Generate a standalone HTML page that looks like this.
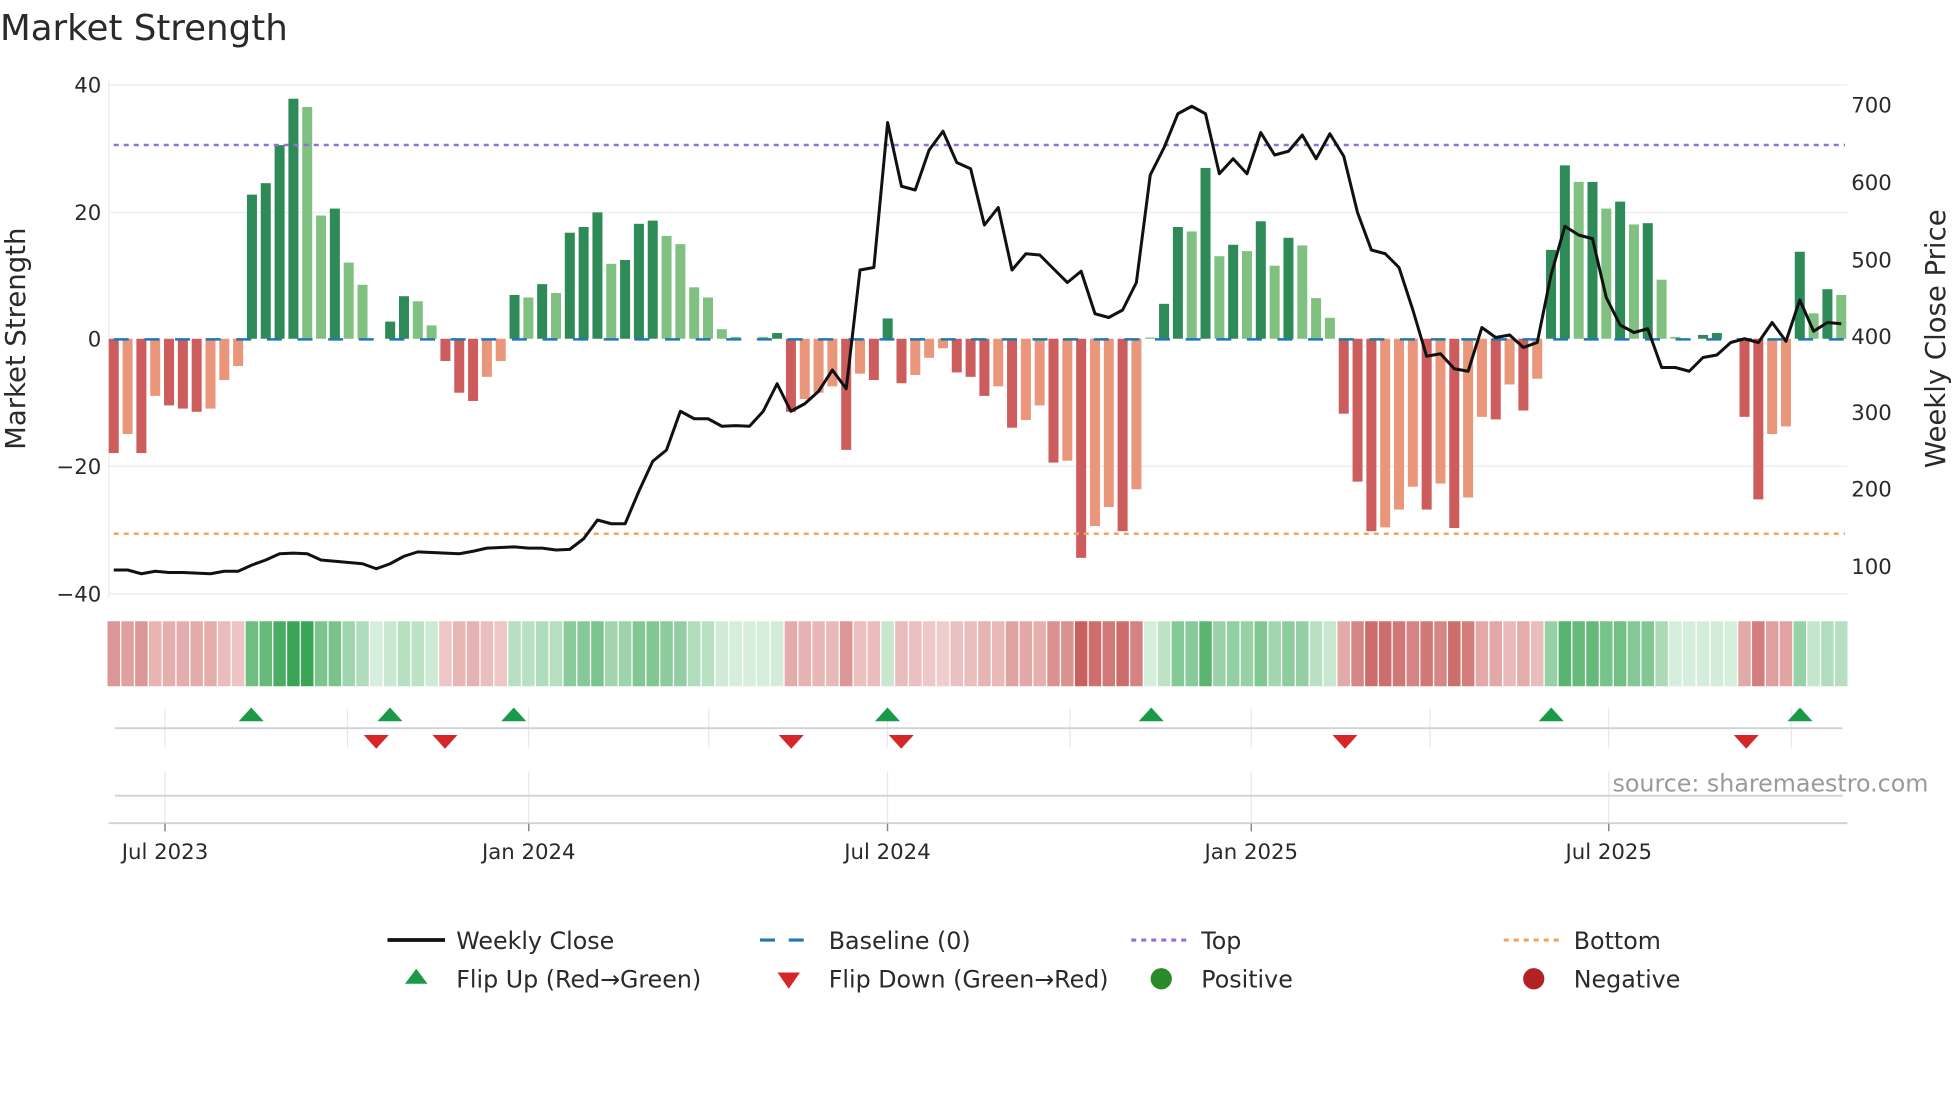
<!DOCTYPE html>
<html><head><meta charset="utf-8"><style>
html,body{margin:0;padding:0;background:#fff;}
svg{display:block;}
text{font-family:"DejaVu Sans","Liberation Sans",sans-serif;fill:#2a2a2a;}
</style></head><body>
<svg id="s" width="1960" height="1102" viewBox="0 0 1568 881.6" xmlns="http://www.w3.org/2000/svg">
<rect width="1568" height="882" fill="#fff"/>
<text x="0" y="32" font-size="28.5">Market Strength</text>
<g id="grid" stroke="#eceef2" stroke-width="1.2">
<line x1="87" y1="68" x2="1478" y2="68"/><line x1="87" y1="170" x2="1478" y2="170"/>
<line x1="87" y1="373" x2="1478" y2="373"/><line x1="87" y1="475" x2="1478" y2="475"/>
<line x1="87" y1="64" x2="87" y2="478"/>
</g>
<g font-size="17" text-anchor="end">
<text x="81" y="74">40</text><text x="81" y="176">20</text><text x="81" y="277">0</text>
<text x="81" y="379">−20</text><text x="81" y="481">−40</text>
</g>
<g font-size="17">
<text x="1481" y="90">700</text><text x="1481" y="152">600</text><text x="1481" y="214">500</text>
<text x="1481" y="275">400</text><text x="1481" y="336">300</text><text x="1481" y="397">200</text><text x="1481" y="459">100</text>
</g>
<text transform="translate(20,271) rotate(-90)" font-size="22" text-anchor="middle">Market Strength</text>
<text transform="translate(1556,271) rotate(-90)" font-size="22" text-anchor="middle">Weekly Close Price</text>
<g id="bars"></g>
<line x1="91" y1="271.5" x2="1478" y2="271.5" stroke="#1f77b4" stroke-width="2" stroke-dasharray="12,12.5"/>
<line x1="91" y1="116" x2="1476" y2="116" stroke="#9370db" stroke-width="2" stroke-dasharray="4,4"/>
<line x1="91" y1="427" x2="1476" y2="427" stroke="#f4a460" stroke-width="2" stroke-dasharray="4,4"/>
<polyline id="price" fill="none" stroke="#111" stroke-width="2.4" stroke-linejoin="round"/>
<g id="strip"></g>
<g stroke="#e6e8ee" stroke-width="1">
<line x1="132" y1="567" x2="132" y2="598"/><line x1="278" y1="567" x2="278" y2="598"/><line x1="423" y1="567" x2="423" y2="598"/><line x1="567" y1="567" x2="567" y2="598"/><line x1="710" y1="567" x2="710" y2="598"/><line x1="856" y1="567" x2="856" y2="598"/><line x1="1001" y1="567" x2="1001" y2="598"/><line x1="1144" y1="567" x2="1144" y2="598"/><line x1="1287" y1="567" x2="1287" y2="598"/><line x1="1433" y1="567" x2="1433" y2="598"/>
<line x1="132" y1="617" x2="132" y2="658"/><line x1="423" y1="617" x2="423" y2="658"/><line x1="710" y1="617" x2="710" y2="658"/><line x1="1001" y1="617" x2="1001" y2="658"/><line x1="1287" y1="617" x2="1287" y2="658"/>
</g>
<line x1="92" y1="582.5" x2="1474" y2="582.5" stroke="#cfd1d6" stroke-width="1.5"/>
<line x1="92" y1="636.5" x2="1474" y2="636.5" stroke="#cfd1d6" stroke-width="1.5"/>
<line x1="87" y1="658.5" x2="1478" y2="658.5" stroke="#cfd1d6" stroke-width="1.5"/>
<g stroke="#888" stroke-width="1.2">
<line x1="132" y1="659" x2="132" y2="665"/><line x1="423" y1="659" x2="423" y2="665"/><line x1="710" y1="659" x2="710" y2="665"/><line x1="1001" y1="659" x2="1001" y2="665"/><line x1="1287" y1="659" x2="1287" y2="665"/>
</g>
<g id="marks"></g>
<text x="1290" y="633" font-size="19" style="fill:#9a9a9a">source: sharemaestro.com</text>
<g font-size="17" text-anchor="middle">
<text x="132" y="687">Jul 2023</text><text x="423" y="687">Jan 2024</text><text x="710" y="687">Jul 2024</text><text x="1001" y="687">Jan 2025</text><text x="1287" y="687">Jul 2025</text>
</g>
<g font-size="19">
<line x1="310" y1="752" x2="356" y2="752" stroke="#111" stroke-width="3"/>
<text x="365" y="759">Weekly Close</text>
<line x1="608" y1="752" x2="652" y2="752" stroke="#1f77b4" stroke-width="2.5" stroke-dasharray="12,11"/>
<text x="663" y="759">Baseline (0)</text>
<line x1="905" y1="752" x2="950" y2="752" stroke="#9370db" stroke-width="2.5" stroke-dasharray="4,4"/>
<text x="961" y="759">Top</text>
<line x1="1203" y1="752" x2="1248" y2="752" stroke="#f4a460" stroke-width="2.5" stroke-dasharray="4,4"/>
<text x="1259" y="759">Bottom</text>
<polygon points="324,787 342,787 333,775" fill="#1a9a47"/>
<text x="365" y="790">Flip Up (Red→Green)</text>
<polygon points="622,778 640,778 631,791" fill="#d62728"/>
<text x="663" y="790">Flip Down (Green→Red)</text>
<circle cx="929" cy="783" r="8.5" fill="#2a8a2a"/>
<text x="961" y="790">Positive</text>
<circle cx="1227" cy="783" r="8.5" fill="#b22222"/>
<text x="1259" y="790">Negative</text>
</g>
</svg>
<script>
var V=[-18,-15,-18,-9,-10.5,-11,-11.5,-11,-6.5,-4.3,22.7,24.5,30.5,37.8,36.5,19.4,20.5,12,8.5,0,2.7,6.7,5.9,2.1,-3.5,-8.5,-9.8,-6,-3.5,6.9,6.5,8.6,7.2,16.7,17.6,19.9,11.8,12.4,18.1,18.6,16.2,14.9,8.1,6.5,1.5,0.3,0,0.3,0.9,-11.5,-9.5,-8.5,-7.5,-17.5,-5.5,-6.5,3.2,-7,-5.7,-3,-1.5,-5.3,-6,-9,-7.5,-14,-12.8,-10.5,-19.5,-19.2,-34.5,-29.5,-26.5,-30.3,-23.7,0.2,5.5,17.6,16.9,26.9,13,14.8,13.8,18.5,11.5,15.9,14.7,6.4,3.3,-11.8,-22.5,-30.3,-29.7,-26.9,-23.3,-26.9,-22.8,-29.8,-25,-12.3,-12.7,-7.2,-11.3,-6.3,14,27.3,24.7,24.7,20.5,21.6,18,18.2,9.3,0.3,0,0.6,0.9,0,-12.3,-25.3,-15,-13.8,13.7,4,7.8,6.9];
var D="dldldddlll"+"ddddlldlll"+"ddlldddlld"+"ldldddlddd"+"lllllllldd"+"llldldddll"+"ldddldlldl"+"dlldllddld"+"ldldldllld"+"ddllldldll"+"dldlddldld"+"ldlllddldd"+"lldldl";
var P=[456,456,459,457,458,458,458.5,459,457,457,452,448,443,442.5,443,448,449,450,451,455,451,445,441.5,442,442.5,443,441,438.5,438,437.5,438.5,438.5,440,439.5,431,416,419,419,393,369,360,329,335,335,341,340.5,341,329,307,329,323,313,296,311,216,214,98,149,152,120,105,130,135,180,166,216,203,204,215,226,217,251,254,248,226,140,118,91,85,91,139,127,139,106,124,121,108,127,107,125,170,200,203,214,248,285,283,295,297,262,270,268,278,274,220,181,188,191,238,260,266,263,294,294,297,286,284,274,271,274,258,273,240,265,258,259];
var ns="http://www.w3.org/2000/svg";
function el(t,a,p){var e=document.createElementNS(ns,t);for(var k in a)e.setAttribute(k,a[k]);p.appendChild(e);return e;}
var bars=document.getElementById('bars'),strip=document.getElementById('strip'),marks=document.getElementById('marks');
var step=(1473-91)/125,pts=[];
function mix(a,b,t){return 'rgb('+[0,1,2].map(function(i){return Math.round(a[i]+(b[i]-a[i])*t)}).join(',')+')';}
for(var i=0;i<V.length;i++){
 var x=91+i*step,v=V[i],y0=271,h=v*5.08;
 var pos=v>=0,dk=D[i]=='d';
 var c=pos?(dk?'#2e8b57':'#80c080'):(dk?'#cd5c5c':'#e9967a');
 if(Math.abs(h)>0.3) el('rect',{x:x-4,y:pos?y0-h:y0,width:8,height:Math.abs(h),fill:c},bars);
 var t=Math.min(Math.abs(v)/34,1);
 var sc=pos?mix([214,238,220],[58,166,85],t):mix([242,210,210],[200,96,94],t);
 el('rect',{x:x-5,y:497,width:10,height:52,fill:sc},strip);
 pts.push(x.toFixed(1)+','+P[i]);
}
document.getElementById('price').setAttribute('points',pts.join(' '));
[201,312,411,710,921,1241,1440].forEach(function(x){el('polygon',{points:(x-10)+',577 '+(x+10)+',577 '+x+',566',fill:'#1a9a47'},marks);});
[301,356,633,721,1076,1397].forEach(function(x){el('polygon',{points:(x-10)+',588 '+(x+10)+',588 '+x+',599',fill:'#d62728'},marks);});
</script>
</body></html>
